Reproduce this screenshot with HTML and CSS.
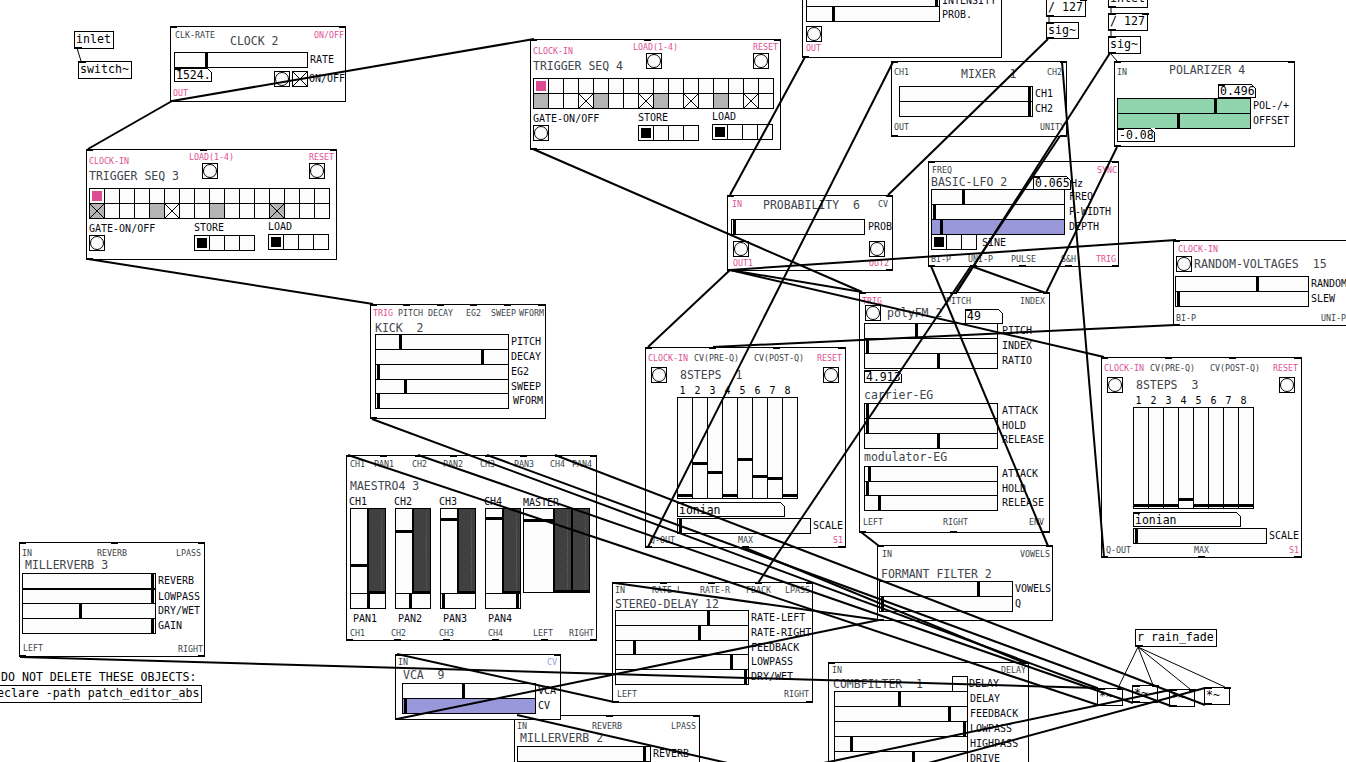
FILE: index.html
```html
<!DOCTYPE html>
<html lang="en">
<head>
<meta charset="utf-8">
<title>Pd patch</title>
<link rel="stylesheet" href="styles.css">
</head>
<body>
<main class="canvas">

<div class="obj" style="left:74px;top:31px;width:40px;height:18px">inlet<i class="o" style="left:0"></i></div>
<div class="obj" style="left:78px;top:61px;width:54px;height:18px">switch~<i class="i" style="left:0"></i></div>
<div class="obj" style="left:1046px;top:-1px;width:40px;height:18px">/ 127<i class="o" style="left:0"></i><i class="i" style="left:33px"></i></div>
<div class="obj" style="left:1046px;top:22px;width:33px;height:17px">sig~<i class="i" style="left:0"></i><i class="o" style="left:0"></i></div>
<div class="obj" style="left:1108px;top:-10px;width:40px;height:18px">inlet<i class="o" style="left:0"></i></div>
<div class="obj" style="left:1108px;top:13px;width:40px;height:18px">/ 127<i class="i" style="left:0"></i><i class="i" style="left:33px"></i><i class="o" style="left:0"></i></div>
<div class="obj" style="left:1108px;top:36px;width:33px;height:18px">sig~<i class="i" style="left:0"></i><i class="o" style="left:0"></i></div>
<div class="obj" style="left:1135px;top:629px;width:82px;height:18px">r rain_fade<i class="o" style="left:0"></i></div>
<div class="obj" style="left:-12px;top:685px;width:214px;height:18px">declare -path patch_editor_abs</div>
<div class="cmt" style="left:1px;top:669px">DO NOT DELETE THESE OBJECTS:</div>

<!-- CLOCK 2 -->
<section class="mod" style="left:170px;top:26px;width:176px;height:76px">
  <i class="i" style="left:0"></i><i class="i" style="left:169px"></i><i class="o" style="left:0"></i>
  <span class="s" style="left:5px;top:4px">CLK-RATE</span>
  <span class="s p" style="left:144px;top:4px">ON/OFF</span>
  <span class="h" style="left:60px;top:8px">CLOCK 2</span>
  <div class="hs" style="left:4px;top:26px"><b class="k" style="left:31px"></b></div>
  <span class="m" style="left:140px;top:27px">RATE</span>
  <div class="num" style="left:4px;top:42px;width:38px;height:14px">1524.</div>
  <div class="bang" style="left:104px;top:45px"></div>
  <div class="tog" style="left:122px;top:45px"></div>
  <span class="m" style="left:139px;top:46px">ON/OFF</span>
  <span class="s p" style="left:3px;top:62px">OUT</span>
</section>

<!-- TRIGGER SEQ 3 -->
<section class="mod" style="left:86px;top:149px;width:251px;height:111px">
  <i class="i" style="left:0"></i><i class="i" style="left:114px"></i><i class="i" style="left:244px"></i><i class="o" style="left:0"></i>
  <span class="s p" style="left:3px;top:7px">CLOCK-IN</span>
  <span class="s p" style="left:103px;top:3px">LOAD(1-4)</span>
  <span class="s p" style="left:223px;top:3px">RESET</span>
  <div class="bang" style="left:116px;top:14px"></div>
  <div class="bang" style="left:223px;top:14px"></div>
  <span class="h" style="left:3px;top:20px">TRIGGER SEQ 3</span>
  <div class="seq" style="left:3px;top:39px">
    <u class="c pk"></u><u class="c"></u><u class="c"></u><u class="c"></u><u class="c"></u><u class="c"></u><u class="c"></u><u class="c"></u><u class="c"></u><u class="c"></u><u class="c"></u><u class="c"></u><u class="c"></u><u class="c"></u><u class="c"></u><u class="c"></u>
    <u class="c g x"></u><u class="c"></u><u class="c"></u><u class="c"></u><u class="c g"></u><u class="c x"></u><u class="c"></u><u class="c"></u><u class="c g"></u><u class="c"></u><u class="c"></u><u class="c"></u><u class="c g x"></u><u class="c"></u><u class="c"></u><u class="c"></u>
  </div>
  <span class="m" style="left:3px;top:73px">GATE-ON/OFF</span>
  <div class="bang" style="left:3px;top:86px"></div>
  <span class="m" style="left:108px;top:72px">STORE</span>
  <div class="seq" style="left:108px;top:86px"><u class="c on"></u><u class="c"></u><u class="c"></u><u class="c"></u></div>
  <span class="m" style="left:182px;top:71px">LOAD</span>
  <div class="seq" style="left:182px;top:85px"><u class="c on"></u><u class="c"></u><u class="c"></u><u class="c"></u></div>
</section>

<!-- TRIGGER SEQ 4 -->
<section class="mod" style="left:530px;top:39px;width:251px;height:111px">
  <i class="i" style="left:0"></i><i class="i" style="left:114px"></i><i class="i" style="left:244px"></i><i class="o" style="left:0"></i>
  <span class="s p" style="left:3px;top:7px">CLOCK-IN</span>
  <span class="s p" style="left:103px;top:3px">LOAD(1-4)</span>
  <span class="s p" style="left:223px;top:3px">RESET</span>
  <div class="bang" style="left:116px;top:14px"></div>
  <div class="bang" style="left:223px;top:14px"></div>
  <span class="h" style="left:3px;top:20px">TRIGGER SEQ 4</span>
  <div class="seq" style="left:3px;top:39px">
    <u class="c pk"></u><u class="c"></u><u class="c"></u><u class="c"></u><u class="c"></u><u class="c"></u><u class="c"></u><u class="c"></u><u class="c"></u><u class="c"></u><u class="c"></u><u class="c"></u><u class="c"></u><u class="c"></u><u class="c"></u><u class="c"></u>
    <u class="c g"></u><u class="c"></u><u class="c"></u><u class="c x"></u><u class="c g"></u><u class="c"></u><u class="c"></u><u class="c x"></u><u class="c g"></u><u class="c"></u><u class="c x"></u><u class="c"></u><u class="c g"></u><u class="c"></u><u class="c x"></u><u class="c"></u>
  </div>
  <span class="m" style="left:3px;top:73px">GATE-ON/OFF</span>
  <div class="bang" style="left:3px;top:86px"></div>
  <span class="m" style="left:108px;top:72px">STORE</span>
  <div class="seq" style="left:108px;top:86px"><u class="c on"></u><u class="c"></u><u class="c"></u><u class="c"></u></div>
  <span class="m" style="left:182px;top:71px">LOAD</span>
  <div class="seq" style="left:182px;top:85px"><u class="c on"></u><u class="c"></u><u class="c"></u><u class="c"></u></div>
</section>

<!-- top module, cut by the window -->
<section class="mod" style="left:802px;top:-50px;width:200px;height:108px">
  <i class="o" style="left:0"></i>
  <div class="hs" style="left:4px;top:41px"><b class="k" style="left:129px"></b></div>
  <div class="hs" style="left:4px;top:56px"><b class="k" style="left:26px"></b></div>
  <span class="m" style="left:140px;top:44px">INTENSITY</span>
  <span class="m" style="left:140px;top:58px">PROB.</span>
  <div class="bang" style="left:4px;top:76px"></div>
  <span class="s p" style="left:4px;top:93px">OUT</span>
</section>

<!-- MIXER 1 -->
<section class="mod" style="left:891px;top:61px;width:176px;height:76px">
  <i class="i" style="left:0"></i><i class="i" style="left:169px"></i><i class="o" style="left:0"></i><i class="o" style="left:169px"></i>
  <span class="s" style="left:3px;top:6px">CH1</span>
  <span class="h" style="left:70px;top:6px">MIXER  1</span>
  <span class="s" style="left:156px;top:6px">CH2</span>
  <div class="hs" style="left:8px;top:25px"><b class="k" style="left:129px"></b></div>
  <div class="hs" style="left:8px;top:40px"><b class="k" style="left:129px"></b></div>
  <span class="m" style="left:144px;top:26px">CH1</span>
  <span class="m" style="left:144px;top:41px">CH2</span>
  <span class="s" style="left:3px;top:61px">OUT</span>
  <span class="s" style="left:149px;top:61px">UNITY</span>
</section>

<!-- PROBABILITY 6 -->
<section class="mod" style="left:727px;top:195px;width:166px;height:76px">
  <i class="i" style="left:0"></i><i class="i" style="left:159px"></i><i class="o" style="left:0"></i><i class="o" style="left:159px"></i>
  <span class="s p" style="left:5px;top:4px">IN</span>
  <span class="h" style="left:36px;top:3px">PROBABILITY  6</span>
  <span class="s" style="left:151px;top:4px">CV</span>
  <div class="hs" style="left:4px;top:24px"><b class="k" style="left:2px"></b></div>
  <span class="m" style="left:141px;top:25px">PROB</span>
  <div class="bang" style="left:6px;top:46px"></div>
  <div class="bang" style="left:142px;top:46px"></div>
  <span class="s p" style="left:6px;top:63px">OUT1</span>
  <span class="s p" style="left:142px;top:63px">OUT2</span>
</section>

<!-- BASIC-LFO 2 -->
<section class="mod" style="left:928px;top:161px;width:191px;height:106px">
  <i class="i" style="left:0"></i><i class="i" style="left:184px"></i>
  <i class="o" style="left:0"></i><i class="o" style="left:42px"></i><i class="o" style="left:91px"></i><i class="o" style="left:137px"></i><i class="o" style="left:184px"></i>
  <span class="s" style="left:4px;top:4px">FREQ</span>
  <span class="s p" style="left:169px;top:4px">SYNC</span>
  <span class="h" style="left:3px;top:14px">BASIC-LFO 2</span>
  <div class="num" style="left:105px;top:15px;width:38px;height:14px">0.065</div>
  <span class="m" style="left:143px;top:16px">Hz</span>
  <div class="hs" style="left:3px;top:28px"><b class="k" style="left:31px"></b></div>
  <div class="hs" style="left:3px;top:43px"><b class="k" style="left:2px"></b></div>
  <div class="hs pu" style="left:3px;top:58px"><b class="k" style="left:9px"></b></div>
  <span class="m" style="left:141px;top:29px">FREQ</span>
  <span class="m" style="left:141px;top:44px">P-WIDTH</span>
  <span class="m" style="left:141px;top:59px">DEPTH</span>
  <div class="seq" style="left:3px;top:73px"><u class="c on"></u><u class="c"></u><u class="c"></u></div>
  <span class="m" style="left:54px;top:75px">SINE</span>
  <span class="s" style="left:3px;top:93px">BI-P</span>
  <span class="s" style="left:40px;top:93px">UNI-P</span>
  <span class="s" style="left:83px;top:93px">PULSE</span>
  <span class="s" style="left:133px;top:93px">S&amp;H</span>
  <span class="s p" style="left:168px;top:93px">TRIG</span>
</section>

<!-- POLARIZER 4 -->
<section class="mod" style="left:1114px;top:61px;width:181px;height:86px">
  <i class="i" style="left:0"></i><i class="i" style="left:174px"></i><i class="o" style="left:0"></i>
  <span class="s" style="left:3px;top:6px">IN</span>
  <span class="h" style="left:55px;top:2px">POLARIZER 4</span>
  <div class="num" style="left:104px;top:23px;width:38px;height:14px">0.496</div>
  <div class="hs gr" style="left:3px;top:37px"><b class="k" style="left:97px"></b></div>
  <div class="hs gr" style="left:3px;top:52px"><b class="k" style="left:60px"></b></div>
  <span class="m" style="left:139px;top:38px">POL-/+</span>
  <span class="m" style="left:139px;top:53px">OFFSET</span>
  <div class="num" style="left:3px;top:67px;width:38px;height:14px">-0.08</div>
</section>

<!-- RANDOM-VOLTAGES 15 -->
<section class="mod" style="left:1173px;top:240px;width:181px;height:86px">
  <i class="i" style="left:0"></i><i class="o" style="left:0"></i><i class="o" style="left:174px"></i>
  <span class="s p" style="left:5px;top:4px">CLOCK-IN</span>
  <div class="bang" style="left:3px;top:16px"></div>
  <span class="h wide-title" style="left:21px;top:17px">RANDOM-VOLTAGES  15</span>
  <div class="hs" style="left:2px;top:36px"><b class="k" style="left:81px"></b></div>
  <div class="hs" style="left:2px;top:51px"><b class="k" style="left:2px"></b></div>
  <span class="m" style="left:138px;top:37px">RANDOM</span>
  <span class="m" style="left:138px;top:52px">SLEW</span>
  <span class="s" style="left:3px;top:73px">BI-P</span>
  <span class="s" style="left:148px;top:73px">UNI-P</span>
</section>

<!-- KICK 2 -->
<section class="mod" style="left:370px;top:304px;width:176px;height:115px">
  <i class="i" style="left:0"></i><i class="i" style="left:33px"></i><i class="i" style="left:67px"></i><i class="i" style="left:100px"></i><i class="i" style="left:134px"></i><i class="i" style="left:168px"></i><i class="o" style="left:0"></i>
  <span class="s p" style="left:3px;top:4px">TRIG</span>
  <span class="s" style="left:28px;top:4px">PITCH</span>
  <span class="s" style="left:58px;top:4px">DECAY</span>
  <span class="s" style="left:96px;top:4px">EG2</span>
  <span class="s" style="left:121px;top:4px">SWEEP</span>
  <span class="s" style="left:149px;top:4px">WFORM</span>
  <span class="h" style="left:5px;top:17px">KICK  2</span>
  <div class="hs" style="left:5px;top:30px"><b class="k" style="left:24px"></b></div>
  <div class="hs" style="left:5px;top:45px"><b class="k" style="left:106px"></b></div>
  <div class="hs" style="left:5px;top:60px"><b class="k" style="left:2px"></b></div>
  <div class="hs" style="left:5px;top:75px"><b class="k" style="left:29px"></b></div>
  <div class="hs" style="left:5px;top:89px"><b class="k" style="left:2px"></b></div>
  <span class="m" style="left:141px;top:31px">PITCH</span>
  <span class="m" style="left:141px;top:46px">DECAY</span>
  <span class="m" style="left:141px;top:61px">EG2</span>
  <span class="m" style="left:141px;top:76px">SWEEP</span>
  <span class="m" style="left:143px;top:90px">WFORM</span>
</section>

<!-- MAESTRO4 3 -->
<section class="mod" style="left:346px;top:455px;width:251px;height:186px">
  <i class="i" style="left:0"></i><i class="i" style="left:34px"></i><i class="i" style="left:69px"></i><i class="i" style="left:104px"></i><i class="i" style="left:139px"></i><i class="i" style="left:174px"></i><i class="i" style="left:209px"></i><i class="i" style="left:244px"></i>
  <i class="o" style="left:0"></i><i class="o" style="left:48px"></i><i class="o" style="left:97px"></i><i class="o" style="left:146px"></i><i class="o" style="left:195px"></i><i class="o" style="left:244px"></i>
  <span class="s" style="left:4px;top:4px">CH1</span>
  <span class="s" style="left:28px;top:4px">PAN1</span>
  <span class="s" style="left:66px;top:4px">CH2</span>
  <span class="s" style="left:97px;top:4px">PAN2</span>
  <span class="s" style="left:134px;top:4px">CH3</span>
  <span class="s" style="left:168px;top:4px">PAN3</span>
  <span class="s" style="left:204px;top:4px">CH4</span>
  <span class="s" style="left:226px;top:4px">PAN4</span>
  <span class="h" style="left:4px;top:24px">MAESTRO4 3</span>
  <span class="m" style="left:3px;top:40px">CH1</span>
  <span class="m" style="left:48px;top:40px">CH2</span>
  <span class="m" style="left:93px;top:40px">CH3</span>
  <span class="m" style="left:138px;top:40px">CH4</span>
  <span class="m" style="left:177px;top:41px">MASTER</span>
  <div class="ch" style="left:4px;top:53px">
    <div class="vf"><b class="kv" style="top:56px"></b></div><div class="vu"></div>
    <div class="hs pan"><b class="k" style="left:17px"></b></div>
  </div>
  <div class="ch" style="left:49px;top:53px">
    <div class="vf"><b class="kv" style="top:22px"></b></div><div class="vu"></div>
    <div class="hs pan"><b class="k" style="left:14px"></b></div>
  </div>
  <div class="ch" style="left:94px;top:53px">
    <div class="vf"><b class="kv" style="top:10px"></b></div><div class="vu"></div>
    <div class="hs pan"><b class="k" style="left:2px"></b></div>
  </div>
  <div class="ch" style="left:139px;top:53px">
    <div class="vf"><b class="kv" style="top:9px"></b></div><div class="vu"></div>
    <div class="hs pan"><b class="k" style="left:31px"></b></div>
  </div>
  <div class="master" style="left:177px;top:53px">
    <div class="vf wide"><b class="kv" style="top:11px"></b></div><div class="vu"></div><div class="vu second"></div>
  </div>
  <span class="m" style="left:7px;top:157px">PAN1</span>
  <span class="m" style="left:52px;top:157px">PAN2</span>
  <span class="m" style="left:97px;top:157px">PAN3</span>
  <span class="m" style="left:142px;top:157px">PAN4</span>
  <span class="s" style="left:4px;top:173px">CH1</span>
  <span class="s" style="left:45px;top:173px">CH2</span>
  <span class="s" style="left:93px;top:173px">CH3</span>
  <span class="s" style="left:142px;top:173px">CH4</span>
  <span class="s" style="left:187px;top:173px">LEFT</span>
  <span class="s" style="left:223px;top:173px">RIGHT</span>
</section>

<!-- 8STEPS 1 -->
<section class="mod" style="left:645px;top:347px;width:201px;height:201px">
  <i class="i" style="left:0"></i><i class="i" style="left:64px"></i><i class="i" style="left:128px"></i><i class="i" style="left:193px"></i>
  <i class="o" style="left:0"></i><i class="o" style="left:97px"></i><i class="o" style="left:193px"></i>
  <span class="s p" style="left:3px;top:6px">CLOCK-IN</span>
  <span class="s" style="left:49px;top:6px">CV(PRE-Q)</span>
  <span class="s" style="left:109px;top:6px">CV(POST-Q)</span>
  <span class="s p" style="left:172px;top:6px">RESET</span>
  <div class="bang" style="left:6px;top:20px"></div>
  <div class="bang" style="left:178px;top:20px"></div>
  <span class="h" style="left:35px;top:21px">8STEPS  1</span>
  <div class="nums" style="left:30px;top:37px"><span>1</span><span>2</span><span>3</span><span>4</span><span>5</span><span>6</span><span>7</span><span>8</span></div>
  <div class="steps" style="left:32px;top:50px">
    <div class="vs"><b class="kv" style="top:97px"></b></div>
    <div class="vs"><b class="kv" style="top:65px"></b></div>
    <div class="vs"><b class="kv" style="top:74px"></b></div>
    <div class="vs"><b class="kv" style="top:97px"></b></div>
    <div class="vs"><b class="kv" style="top:61px"></b></div>
    <div class="vs"><b class="kv" style="top:78px"></b></div>
    <div class="vs"><b class="kv" style="top:80px"></b></div>
    <div class="vs"><b class="kv" style="top:97px"></b></div>
  </div>
  <div class="num sym" style="left:32px;top:155px;width:108px;height:15px">ionian</div>
  <div class="hs" style="left:32px;top:171px"><b class="k" style="left:2px"></b></div>
  <span class="m" style="left:168px;top:172px">SCALE</span>
  <span class="s" style="left:5px;top:188px">Q-OUT</span>
  <span class="s" style="left:93px;top:188px">MAX</span>
  <span class="s p" style="left:188px;top:188px">S1</span>
</section>

<!-- 8STEPS 3 -->
<section class="mod" style="left:1101px;top:357px;width:201px;height:201px">
  <i class="i" style="left:0"></i><i class="i" style="left:64px"></i><i class="i" style="left:128px"></i><i class="i" style="left:193px"></i>
  <i class="o" style="left:0"></i><i class="o" style="left:97px"></i><i class="o" style="left:193px"></i>
  <span class="s p" style="left:3px;top:6px">CLOCK-IN</span>
  <span class="s" style="left:49px;top:6px">CV(PRE-Q)</span>
  <span class="s" style="left:109px;top:6px">CV(POST-Q)</span>
  <span class="s p" style="left:172px;top:6px">RESET</span>
  <div class="bang" style="left:6px;top:20px"></div>
  <div class="bang" style="left:178px;top:20px"></div>
  <span class="h" style="left:35px;top:21px">8STEPS  3</span>
  <div class="nums" style="left:30px;top:37px"><span>1</span><span>2</span><span>3</span><span>4</span><span>5</span><span>6</span><span>7</span><span>8</span></div>
  <div class="steps" style="left:32px;top:50px">
    <div class="vs"><b class="kv" style="top:97px"></b></div>
    <div class="vs"><b class="kv" style="top:97px"></b></div>
    <div class="vs"><b class="kv" style="top:97px"></b></div>
    <div class="vs"><b class="kv" style="top:91px"></b></div>
    <div class="vs"><b class="kv" style="top:97px"></b></div>
    <div class="vs"><b class="kv" style="top:97px"></b></div>
    <div class="vs"><b class="kv" style="top:97px"></b></div>
    <div class="vs"><b class="kv" style="top:97px"></b></div>
  </div>
  <div class="num sym" style="left:32px;top:155px;width:108px;height:15px">ionian</div>
  <div class="hs" style="left:32px;top:171px"><b class="k" style="left:2px"></b></div>
  <span class="m" style="left:168px;top:172px">SCALE</span>
  <span class="s" style="left:5px;top:188px">Q-OUT</span>
  <span class="s" style="left:93px;top:188px">MAX</span>
  <span class="s p" style="left:188px;top:188px">S1</span>
</section>

<!-- polyFM 2 -->
<section class="mod" style="left:859px;top:292px;width:191px;height:241px">
  <i class="i" style="left:0"></i><i class="i" style="left:91px"></i><i class="i" style="left:184px"></i>
  <i class="o" style="left:0"></i><i class="o" style="left:91px"></i><i class="o" style="left:184px"></i>
  <span class="s p" style="left:3px;top:4px">TRIG</span>
  <span class="s" style="left:87px;top:4px">PITCH</span>
  <span class="s" style="left:161px;top:4px">INDEX</span>
  <div class="bang" style="left:6px;top:13px"></div>
  <span class="h" style="left:28px;top:14px">polyFM 2</span>
  <div class="num" style="left:106px;top:17px;width:38px;height:15px">49</div>
  <div class="hs" style="left:5px;top:31px"><b class="k" style="left:51px"></b></div>
  <div class="hs" style="left:5px;top:46px"><b class="k" style="left:2px"></b></div>
  <div class="hs" style="left:5px;top:61px"><b class="k" style="left:73px"></b></div>
  <span class="m" style="left:143px;top:32px">PITCH</span>
  <span class="m" style="left:143px;top:47px">INDEX</span>
  <span class="m" style="left:143px;top:62px">RATIO</span>
  <div class="num" style="left:5px;top:78px;width:38px;height:13px">4.913</div>
  <span class="h" style="left:5px;top:96px">carrier-EG</span>
  <div class="hs" style="left:5px;top:111px"><b class="k" style="left:2px"></b></div>
  <div class="hs" style="left:5px;top:126px"><b class="k" style="left:2px"></b></div>
  <div class="hs" style="left:5px;top:141px"><b class="k" style="left:73px"></b></div>
  <span class="m" style="left:143px;top:112px">ATTACK</span>
  <span class="m" style="left:143px;top:127px">HOLD</span>
  <span class="m" style="left:143px;top:141px">RELEASE</span>
  <span class="h" style="left:5px;top:158px">modulator-EG</span>
  <div class="hs" style="left:5px;top:174px"><b class="k" style="left:4px"></b></div>
  <div class="hs" style="left:5px;top:189px"><b class="k" style="left:2px"></b></div>
  <div class="hs" style="left:5px;top:203px"><b class="k" style="left:14px"></b></div>
  <span class="m" style="left:143px;top:175px">ATTACK</span>
  <span class="m" style="left:143px;top:190px">HOLD</span>
  <span class="m" style="left:143px;top:204px">RELEASE</span>
  <span class="s" style="left:4px;top:225px">LEFT</span>
  <span class="s" style="left:84px;top:225px">RIGHT</span>
  <span class="s" style="left:170px;top:225px">ENV</span>
</section>

<!-- FORMANT FILTER 2 -->
<section class="mod" style="left:877px;top:545px;width:176px;height:76px">
  <i class="i" style="left:0"></i><i class="i" style="left:169px"></i><i class="o" style="left:0"></i>
  <span class="s" style="left:5px;top:4px">IN</span>
  <span class="s" style="left:143px;top:4px">VOWELS</span>
  <span class="h" style="left:4px;top:22px">FORMANT FILTER 2</span>
  <div class="hs" style="left:2px;top:36px"><b class="k" style="left:98px"></b></div>
  <div class="hs" style="left:2px;top:51px"><b class="k" style="left:2px"></b></div>
  <span class="m" style="left:138px;top:37px">VOWELS</span>
  <span class="m" style="left:138px;top:52px">Q</span>
</section>

<!-- COMBFILTER 1 -->
<section class="mod" style="left:828px;top:662px;width:201px;height:110px">
  <i class="i" style="left:0"></i><i class="i" style="left:194px"></i>
  <span class="s" style="left:4px;top:3px">IN</span>
  <span class="s" style="left:173px;top:3px">DELAY</span>
  <span class="h" style="left:5px;top:15px">COMBFILTER  1</span>
  <div class="num plain" style="left:124px;top:14px;width:16px;height:16px"></div>
  <span class="m" style="left:141px;top:15px">DELAY</span>
  <div class="hs" style="left:6px;top:29px"><b class="k" style="left:64px"></b></div>
  <div class="hs" style="left:6px;top:44px"><b class="k" style="left:114px"></b></div>
  <div class="hs" style="left:6px;top:59px"><b class="k" style="left:129px"></b></div>
  <div class="hs" style="left:6px;top:74px"><b class="k" style="left:16px"></b></div>
  <div class="hs" style="left:6px;top:89px"><b class="k" style="left:78px"></b></div>
  <span class="m" style="left:142px;top:30px">DELAY</span>
  <span class="m" style="left:142px;top:45px">FEEDBACK</span>
  <span class="m" style="left:142px;top:60px">LOWPASS</span>
  <span class="m" style="left:142px;top:75px">HIGHPASS</span>
  <span class="m" style="left:142px;top:90px">DRIVE</span>
</section>

<!-- MILLERVERB 3 -->
<section class="mod" style="left:19px;top:542px;width:186px;height:115px">
  <i class="i" style="left:0"></i><i class="i" style="left:92px"></i><i class="i" style="left:179px"></i><i class="o" style="left:0"></i><i class="o" style="left:179px"></i>
  <span class="s" style="left:3px;top:6px">IN</span>
  <span class="s" style="left:78px;top:6px">REVERB</span>
  <span class="s" style="left:157px;top:6px">LPASS</span>
  <span class="h" style="left:6px;top:16px">MILLERVERB 3</span>
  <div class="hs" style="left:3px;top:31px"><b class="k" style="left:129px"></b></div>
  <div class="hs" style="left:3px;top:47px"><b class="k" style="left:129px"></b></div>
  <div class="hs" style="left:3px;top:61px"><b class="k" style="left:57px"></b></div>
  <div class="hs" style="left:3px;top:76px"><b class="k" style="left:129px"></b></div>
  <span class="m" style="left:139px;top:32px">REVERB</span>
  <span class="m" style="left:139px;top:48px">LOWPASS</span>
  <span class="m" style="left:139px;top:62px">DRY/WET</span>
  <span class="m" style="left:139px;top:77px">GAIN</span>
  <span class="s" style="left:4px;top:101px">LEFT</span>
  <span class="s" style="left:159px;top:102px">RIGHT</span>
</section>

<!-- MILLERVERB 2 -->
<section class="mod" style="left:514px;top:715px;width:186px;height:115px">
  <i class="i" style="left:0"></i><i class="i" style="left:92px"></i><i class="i" style="left:179px"></i>
  <span class="s" style="left:3px;top:6px">IN</span>
  <span class="s" style="left:78px;top:6px">REVERB</span>
  <span class="s" style="left:157px;top:6px">LPASS</span>
  <span class="h" style="left:6px;top:16px">MILLERVERB 2</span>
  <div class="hs" style="left:3px;top:31px"><b class="k" style="left:126px"></b></div>
  <span class="m" style="left:139px;top:32px">REVERB</span>
</section>

<!-- VCA 9 -->
<section class="mod" style="left:395px;top:654px;width:166px;height:66px">
  <i class="i" style="left:0"></i><i class="i" style="left:159px"></i><i class="o" style="left:0"></i>
  <span class="s" style="left:3px;top:3px">IN</span>
  <span class="s lilac" style="left:152px;top:3px">CV</span>
  <span class="h" style="left:8px;top:14px">VCA  9</span>
  <div class="hs" style="left:7px;top:29px"><b class="k" style="left:60px"></b></div>
  <div class="hs pu" style="left:7px;top:44px"><b class="k" style="left:2px"></b></div>
  <span class="m" style="left:143px;top:30px">VCA</span>
  <span class="m" style="left:143px;top:45px">CV</span>
</section>

<!-- STEREO-DELAY 12 -->
<section class="mod" style="left:612px;top:582px;width:201px;height:121px">
  <i class="i" style="left:0"></i><i class="i" style="left:48px"></i><i class="i" style="left:96px"></i><i class="i" style="left:143px"></i><i class="i" style="left:194px"></i>
  <i class="o" style="left:0"></i><i class="o" style="left:194px"></i>
  <span class="s" style="left:3px;top:3px">IN</span>
  <span class="s" style="left:40px;top:3px">RATE-L</span>
  <span class="s" style="left:88px;top:3px">RATE-R</span>
  <span class="s" style="left:134px;top:3px">FBACK</span>
  <span class="s" style="left:173px;top:3px">LPASS</span>
  <span class="h" style="left:3px;top:15px">STEREO-DELAY 12</span>
  <div class="hs" style="left:3px;top:28px"><b class="k" style="left:92px"></b></div>
  <div class="hs" style="left:3px;top:43px"><b class="k" style="left:83px"></b></div>
  <div class="hs" style="left:3px;top:58px"><b class="k" style="left:18px"></b></div>
  <div class="hs" style="left:3px;top:72px"><b class="k" style="left:115px"></b></div>
  <div class="hs" style="left:3px;top:87px"><b class="k" style="left:129px"></b></div>
  <span class="m" style="left:139px;top:29px">RATE-LEFT</span>
  <span class="m" style="left:139px;top:44px">RATE-RIGHT</span>
  <span class="m" style="left:139px;top:59px">FEEDBACK</span>
  <span class="m" style="left:139px;top:73px">LOWPASS</span>
  <span class="m" style="left:139px;top:88px">DRY/WET</span>
  <span class="s" style="left:5px;top:107px">LEFT</span>
  <span class="s" style="left:172px;top:107px">RIGHT</span>
</section>

<div class="obj" style="left:1097px;top:688px;width:26px;height:18px">*~<i class="i" style="left:0"></i><i class="i" style="left:19px"></i><i class="o" style="left:0"></i></div>
<div class="obj" style="left:1132px;top:685px;width:26px;height:18px">*~<i class="i" style="left:0"></i><i class="i" style="left:19px"></i><i class="o" style="left:0"></i></div>
<div class="obj" style="left:1169px;top:689px;width:26px;height:18px">*~<i class="i" style="left:0"></i><i class="i" style="left:19px"></i><i class="o" style="left:0"></i></div>
<div class="obj" style="left:1204px;top:687px;width:26px;height:18px">*~<i class="i" style="left:0"></i><i class="i" style="left:19px"></i><i class="o" style="left:0"></i></div>

<svg class="wires" width="1346" height="762" viewBox="0 0 1346 762" aria-hidden="true">
  <g class="thin">
    <line x1="77" y1="48" x2="81" y2="61"/>
    <line x1="1049" y1="16" x2="1049" y2="22"/>
    <line x1="1111" y1="7" x2="1111" y2="13"/>
    <line x1="1111" y1="30" x2="1111" y2="36"/>
    <line x1="1138" y1="647" x2="1118" y2="688"/>
    <line x1="1138" y1="647" x2="1153" y2="685"/>
    <line x1="1138" y1="647" x2="1190" y2="689"/>
    <line x1="1138" y1="647" x2="1225" y2="687"/>
    <line x1="1111" y1="54" x2="1117" y2="61"/>
  </g>
  <g class="thick">
    <line x1="172" y1="101" x2="88" y2="149"/>
    <line x1="172" y1="101" x2="534" y2="39"/>
    <line x1="88" y1="259" x2="373" y2="304"/>
    <line x1="533" y1="149" x2="862" y2="292"/>
    <line x1="805" y1="57" x2="730" y2="195"/>
    <line x1="730" y1="270" x2="648" y2="347"/>
    <line x1="730" y1="270" x2="862" y2="292"/>
    <line x1="730" y1="270" x2="1176" y2="240"/>
    <line x1="730" y1="270" x2="1104" y2="357"/>
    <line x1="648" y1="547" x2="893" y2="62"/>
    <line x1="1062" y1="62" x2="1104" y2="557"/>
    <line x1="1048" y1="39" x2="888" y2="195"/>
    <line x1="1110" y1="53" x2="957" y2="292"/>
    <line x1="1060" y1="136" x2="956" y2="292"/>
    <line x1="1117" y1="147" x2="1046" y2="293"/>
    <line x1="931" y1="266" x2="1048" y2="546"/>
    <line x1="971" y1="266" x2="1046" y2="293"/>
    <line x1="971" y1="266" x2="758" y2="583"/>
    <line x1="1175" y1="325" x2="713" y2="347"/>
    <line x1="861" y1="532" x2="879" y2="546"/>
    <line x1="397" y1="654" x2="614" y2="702"/>
    <line x1="615" y1="583" x2="879" y2="620"/>
    <line x1="397" y1="719" x2="879" y2="620"/>
    <line x1="517" y1="715" x2="780" y2="775"/>
    <line x1="20" y1="657" x2="1098" y2="688"/>
    <line x1="372" y1="419" x2="1097" y2="688"/>
    <line x1="743" y1="547" x2="1025" y2="663"/>
    <line x1="1098" y1="705" x2="348" y2="455"/>
    <line x1="1133" y1="703" x2="418" y2="455"/>
    <line x1="1171" y1="706" x2="487" y2="455"/>
    <line x1="1205" y1="705" x2="555" y2="455"/>
    <line x1="800" y1="768" x2="1170" y2="690"/>
    <line x1="910" y1="768" x2="1205" y2="688"/>
  </g>
</svg>
</main>
</body>
</html>
```
FILE: styles.css
```css
* { box-sizing: border-box; }
html, body { margin: 0; padding: 0; background: #fff; }
body { overflow: hidden; }

.canvas {
  position: relative;
  width: 1346px;
  height: 762px;
  overflow: hidden;
  background: #fff;
  font-family: "DejaVu Sans Mono", monospace;
  color: #000;
}

.mod {
  position: absolute;
  background: #fff;
  box-shadow: inset 0 0 0 1px #000;
}
.i, .o {
  position: absolute;
  width: 7px;
  height: 2px;
  background: #000;
}
.i { top: 0; }
.o { bottom: 0; }

.s, .m, .h { position: absolute; white-space: pre; }
.s { font-size: 8.3px; line-height: 10px; color: #3b3f49; }
.m { font-size: 10px; line-height: 14px; color: #0a0a14; }
.h { font-size: 11.5px; line-height: 14px; color: #40444c; }
.h.wide-title { font-size: 11.6px; }
.p { color: #e04f94; }
.lilac { color: #9a9add; }

.obj {
  position: absolute;
  border: 1px solid #000;
  background: #fff;
  padding-left: 1px;
  font-size: 11.6px;
  line-height: 14px;
  white-space: pre;
}
.obj .i { top: -1px; left: -1px; }
.obj .o { bottom: -1px; left: -1px; }
.cmt {
  position: absolute;
  font-size: 11.6px;
  line-height: 16px;
  white-space: pre;
}

.hs {
  position: absolute;
  width: 134px;
  height: 16px;
  background: #fcfcfc;
  border: 1px solid #000;
}
.hs.pu { background: #9797da; }
.hs.gr { background: #8fd4ad; }
.k {
  position: absolute;
  top: 0;
  bottom: 0;
  width: 3px;
  margin-left: -1px;
  background: #000;
}

.bang {
  position: absolute;
  width: 16px;
  height: 16px;
  background: #fcfcfc;
  border: 1px solid #000;
}
.bang::after {
  content: "";
  position: absolute;
  inset: 0;
  border: 1px solid #000;
  border-radius: 50%;
  background: #fcfcfc;
}
.tog {
  position: absolute;
  width: 16px;
  height: 16px;
  border: 1px solid #000;
  background:
    linear-gradient(45deg, transparent calc(50% - .6px), #000 calc(50% - .6px), #000 calc(50% + .6px), transparent calc(50% + .6px)),
    linear-gradient(-45deg, transparent calc(50% - .6px), #000 calc(50% - .6px), #000 calc(50% + .6px), transparent calc(50% + .6px)),
    #fcfcfc;
}

.num {
  position: absolute;
  background: #fff;
  border: 1px solid #000;
  padding-left: 1px;
  font-size: 11.5px;
  line-height: 13px;
  white-space: pre;
}
.num.sym { line-height: 15px; }
.num::before {
  content: "";
  position: absolute;
  left: -1px;
  top: -1px;
  width: 7px;
  height: 2px;
  background: #000;
}
.num::after {
  content: "";
  position: absolute;
  right: -1px;
  top: -1px;
  width: 5px;
  height: 5px;
  background: linear-gradient(to top right, transparent calc(50% - .6px), #000 calc(50% - .6px), #000 calc(50% + .6px), #fff calc(50% + .6px));
}
.num.plain::before, .num.plain::after { display: none; }

.seq {
  position: absolute;
  display: grid;
  grid-template-columns: repeat(16, 15px);
  grid-auto-rows: 15px;
}
.c {
  position: relative;
  display: block;
  width: 16px;
  height: 16px;
  border: 1px solid #000;
  background: #fcfcfc;
  text-decoration: none;
}
.c.g { background: #b4b4b4; }
.c.x {
  background:
    linear-gradient(45deg, transparent calc(50% - .6px), #000 calc(50% - .6px), #000 calc(50% + .6px), transparent calc(50% + .6px)),
    linear-gradient(-45deg, transparent calc(50% - .6px), #000 calc(50% - .6px), #000 calc(50% + .6px), transparent calc(50% + .6px)),
    #fcfcfc;
}
.c.g.x {
  background:
    linear-gradient(45deg, transparent calc(50% - .6px), #000 calc(50% - .6px), #000 calc(50% + .6px), transparent calc(50% + .6px)),
    linear-gradient(-45deg, transparent calc(50% - .6px), #000 calc(50% - .6px), #000 calc(50% + .6px), transparent calc(50% + .6px)),
    #b4b4b4;
}
.c.pk::after, .c.on::after {
  content: "";
  position: absolute;
  inset: 2px;
}
.c.pk::after { background: #dc4a93; }
.c.on::after { background: #000; }

.nums {
  position: absolute;
  display: flex;
  font-size: 10px;
  line-height: 14px;
}
.nums span { width: 15px; text-align: center; }
.steps { position: absolute; display: flex; }
.vs, .vf {
  position: relative;
  width: 16px;
  height: 102px;
  margin-right: -1px;
  border: 1px solid #000;
  background: #fcfcfc;
}
.kv {
  position: absolute;
  left: 0;
  right: 0;
  height: 3px;
  margin-top: -1px;
  background: #000;
}

.ch, .master { position: absolute; }
.ch { width: 36px; height: 102px; }
.master { width: 67px; height: 85px; }
.ch .vf, .master .vf {
  position: absolute;
  left: 0;
  top: 0;
  width: 18px;
  height: 86px;
}
.master .vf.wide { width: 31px; height: 85px; }
.vu {
  position: absolute;
  top: 0;
  left: 17px;
  width: 19px;
  height: 86px;
  border: 1px solid #000;
  border-left-width: 2px;
  border-bottom-width: 3px;
  background: #404040;
}
.vu::after {
  content: "";
  position: absolute;
  right: 3px;
  top: 0;
  bottom: 0;
  width: 1px;
  opacity: .45;
  background:
    repeating-linear-gradient(#404040 0 1px, transparent 1px 2px),
    linear-gradient(#b05050, #b0a050 40%, #50a050);
}
.master .vu { left: 30px; height: 85px; width: 19px; }
.master .vu.second { left: 48px; width: 19px; }
.hs.pan { left: 0; top: 85px; width: 36px; }

.wires {
  position: absolute;
  left: 0;
  top: 0;
  pointer-events: none;
}
.wires line { stroke: #000; }
.wires .thick line { stroke-width: 2; }
.wires .thin line { stroke-width: 1; }
```
